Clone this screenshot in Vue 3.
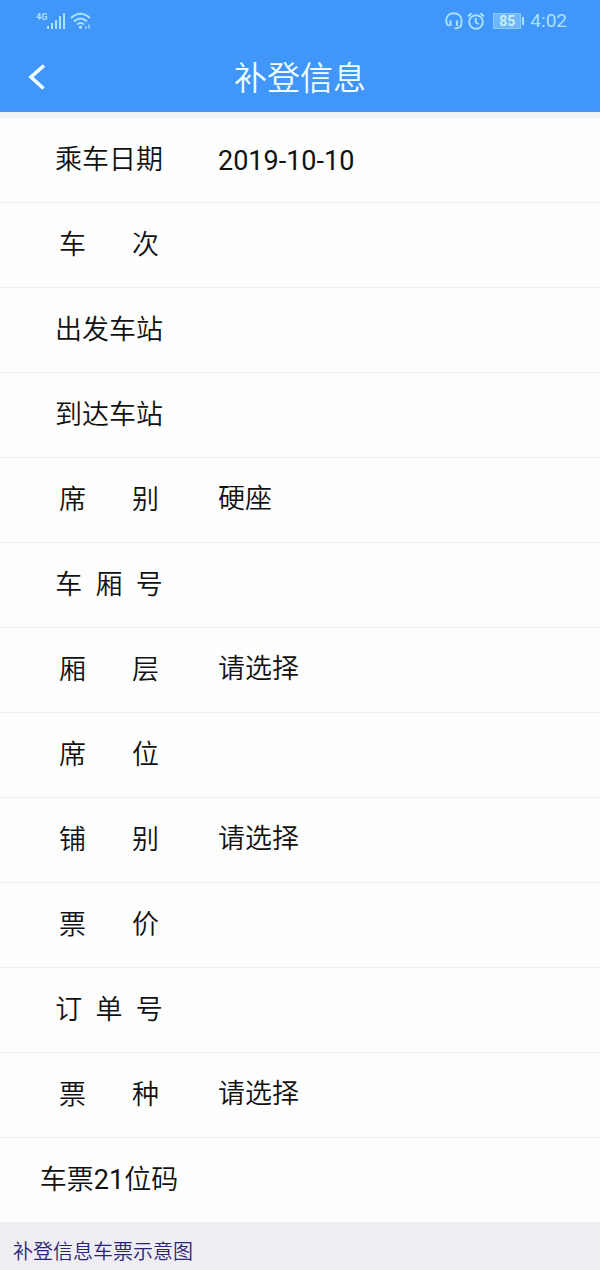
<template>
  <div class="page">
    <header class="header">
      <div class="status-bar">
        <div class="status-left">
          <span class="network">4G</span>
          <svg class="signal" width="18" height="18" viewBox="0 0 18 18" fill="currentColor">
            <rect x="0" y="14" width="2" height="3" />
            <rect x="4" y="11" width="2" height="6" />
            <rect x="8" y="8" width="2" height="9" />
            <rect x="12" y="4" width="2" height="13" />
            <rect x="16" y="1" width="2" height="16" />
          </svg>
          <svg class="wifi" width="22" height="18" viewBox="0 0 22 18" fill="none" stroke="currentColor" stroke-width="2">
            <path d="M1 6 Q10.500 -2.500 20 6" />
            <path d="M4 9.500 Q10.500 3.500 17 9.500" />
            <path d="M7 12.500 Q10.500 9.500 14 12.500" />
            <circle cx="10.500" cy="15.200" r="1.600" fill="currentColor" stroke="none" />
            <path d="M16 14v3M19 12.500v4" stroke-width="1.300" />
          </svg>
        </div>
        <div class="status-right">
          <svg width="18" height="18" viewBox="0 0 18 18" fill="none" stroke="currentColor" stroke-width="1.900">
            <path d="M4 13.500C2 13 1.200 11 1.200 8.500C1.200 4 4.500 1.200 8.800 1.200S16.500 4 16.500 8.500V11C16.500 14.500 14.500 16.200 11 16.200H9.500" />
            <path d="M5.500 8.500v5.500M12 8.500v5.500" stroke-width="2.200" />
          </svg>
          <svg width="18" height="18" viewBox="0 0 18 18" fill="none" stroke="currentColor" stroke-width="1.900">
            <circle cx="9" cy="10" r="6.800" />
            <path d="M8.800 6v4.500l3 1.800M1 4.500l3.500-3.300M13.500 1.200L17 4.500" />
          </svg>
          <span class="battery">85</span>
          <span class="clock">4:02</span>
        </div>
      </div>
      <div class="title-bar">
        <button class="back" type="button" aria-label="返回">
          <svg width="18" height="26" viewBox="0 0 18 26" fill="none" stroke="currentColor" stroke-width="3.600">
            <path d="M16 1.500L3 13L15.500 24.500" />
          </svg>
        </button>
        <h1 class="title">补登信息</h1>
      </div>
    </header>

    <form class="form" @submit.prevent>
      <div v-for="field in fields" :key="field.id" class="row">
        <label class="label" :for="field.id">
          <span
            v-for="(part, index) in field.label.split(/(\d+)/)"
            :key="index"
            :class="{ digits: index % 2 === 1 }"
          >{{ part }}</span>
        </label>
        <select v-if="field.options" :id="field.id" v-model="field.value" class="control select">
          <option v-for="option in field.options" :key="option" :value="option">{{ option }}</option>
        </select>
        <input v-else :id="field.id" v-model="field.value" class="control" type="text" />
      </div>
    </form>

    <footer class="footer">
      <a class="footer-link" href="#">补登信息车票示意图</a>
    </footer>
  </div>
</template>

<script setup>
import { reactive } from 'vue'

// Short labels are padded with non-breaking spaces to line up with the four-character ones
const spread = (text, count) => text.split('').join('\u00a0'.repeat(count))

const fields = reactive([
  { id: 'date', label: '乘车日期', value: '2019-10-10' },
  { id: 'train', label: spread('车次', 7), value: '' },
  { id: 'from', label: '出发车站', value: '' },
  { id: 'to', label: '到达车站', value: '' },
  { id: 'seat-class', label: spread('席别', 7), value: '硬座', options: ['硬座'] },
  { id: 'carriage', label: spread('车厢号', 2), value: '' },
  { id: 'deck', label: spread('厢层', 7), value: '请选择', options: ['请选择'] },
  { id: 'seat', label: spread('席位', 7), value: '' },
  { id: 'berth', label: spread('铺别', 7), value: '请选择', options: ['请选择'] },
  { id: 'price', label: spread('票价', 7), value: '' },
  { id: 'order', label: spread('订单号', 2), value: '' },
  { id: 'ticket-type', label: spread('票种', 7), value: '请选择', options: ['请选择'] },
  { id: 'code', label: '车票21位码', value: '' }
])
</script>

<style>
body {
  margin: 0;
  background: #eeeef2;
}
</style>

<style scoped>
.page {
  font-family: Roboto, "Noto Sans CJK SC", sans-serif;
  color: #111;
}

.header {
  background: #4196fa;
  border-bottom: 1px solid #4a92dc;
}

.status-bar {
  display: flex;
  justify-content: space-between;
  align-items: center;
  height: 42px;
  padding: 0 33px 0 36px;
  color: #a9e2fd;
}

.status-left {
  display: flex;
  align-items: center;
}

.network {
  align-self: flex-start;
  font-size: 9px;
  line-height: 10px;
  font-weight: 700;
}

.wifi {
  margin-left: 5px;
}

.status-right {
  display: flex;
  align-items: center;
  gap: 4px;
}

.battery {
  position: relative;
  width: 28px;
  margin: 0 5px 0 4px;
  box-sizing: border-box;
  border: 1px solid #86cbfb;
  background: #6fb6fb;
  color: #c4effe;
  font-size: 14px;
  line-height: 14px;
  font-weight: 700;
  text-align: center;
}

.battery::after {
  content: "";
  position: absolute;
  top: 3px;
  right: -4px;
  width: 2px;
  height: 8px;
  background: #a9e2fd;
}

.clock {
  font-size: 19px;
  line-height: 24px;
}

.title-bar {
  display: grid;
  grid-template-columns: 64px 1fr 64px;
  align-items: center;
  height: 69px;
  color: #f0ffff;
}

.back {
  display: flex;
  padding: 0 0 0 28px;
  border: none;
  background: none;
  color: inherit;
  cursor: pointer;
}

.title {
  margin: 0;
  padding-top: 4px;
  font-size: 33px;
  line-height: 48px;
  font-weight: 350;
  text-align: center;
}

.form {
  border-top: 6px solid #eef3f7;
  background: #fefefe;
}

.row {
  display: grid;
  grid-template-columns: 218px 1fr;
  align-items: center;
  height: 84px;
  border-bottom: 1px solid #eceff2;
}

.row:last-child {
  border-bottom: none;
}

.label {
  font-size: 27px;
  line-height: 40px;
  font-weight: 350;
  text-align: center;
  white-space: nowrap;
}

.digits {
  font-weight: 400;
}

.control {
  width: 100%;
  height: 42px;
  padding: 2px 0 0;
  box-sizing: border-box;
  border: none;
  outline: none;
  background: transparent;
  color: inherit;
  font-family: inherit;
  font-size: 27px;
  font-weight: 400;
  line-height: 40px;
}

.select {
  padding: 0 0 2px;
  appearance: none;
  font-weight: 350;
}

.footer {
  padding: 15px 13px 3px;
  background: #eeeef2;
}

.footer-link {
  display: block;
  color: #2a2478;
  font-size: 20px;
  line-height: 30px;
  font-weight: 350;
  text-decoration: none;
}
</style>
